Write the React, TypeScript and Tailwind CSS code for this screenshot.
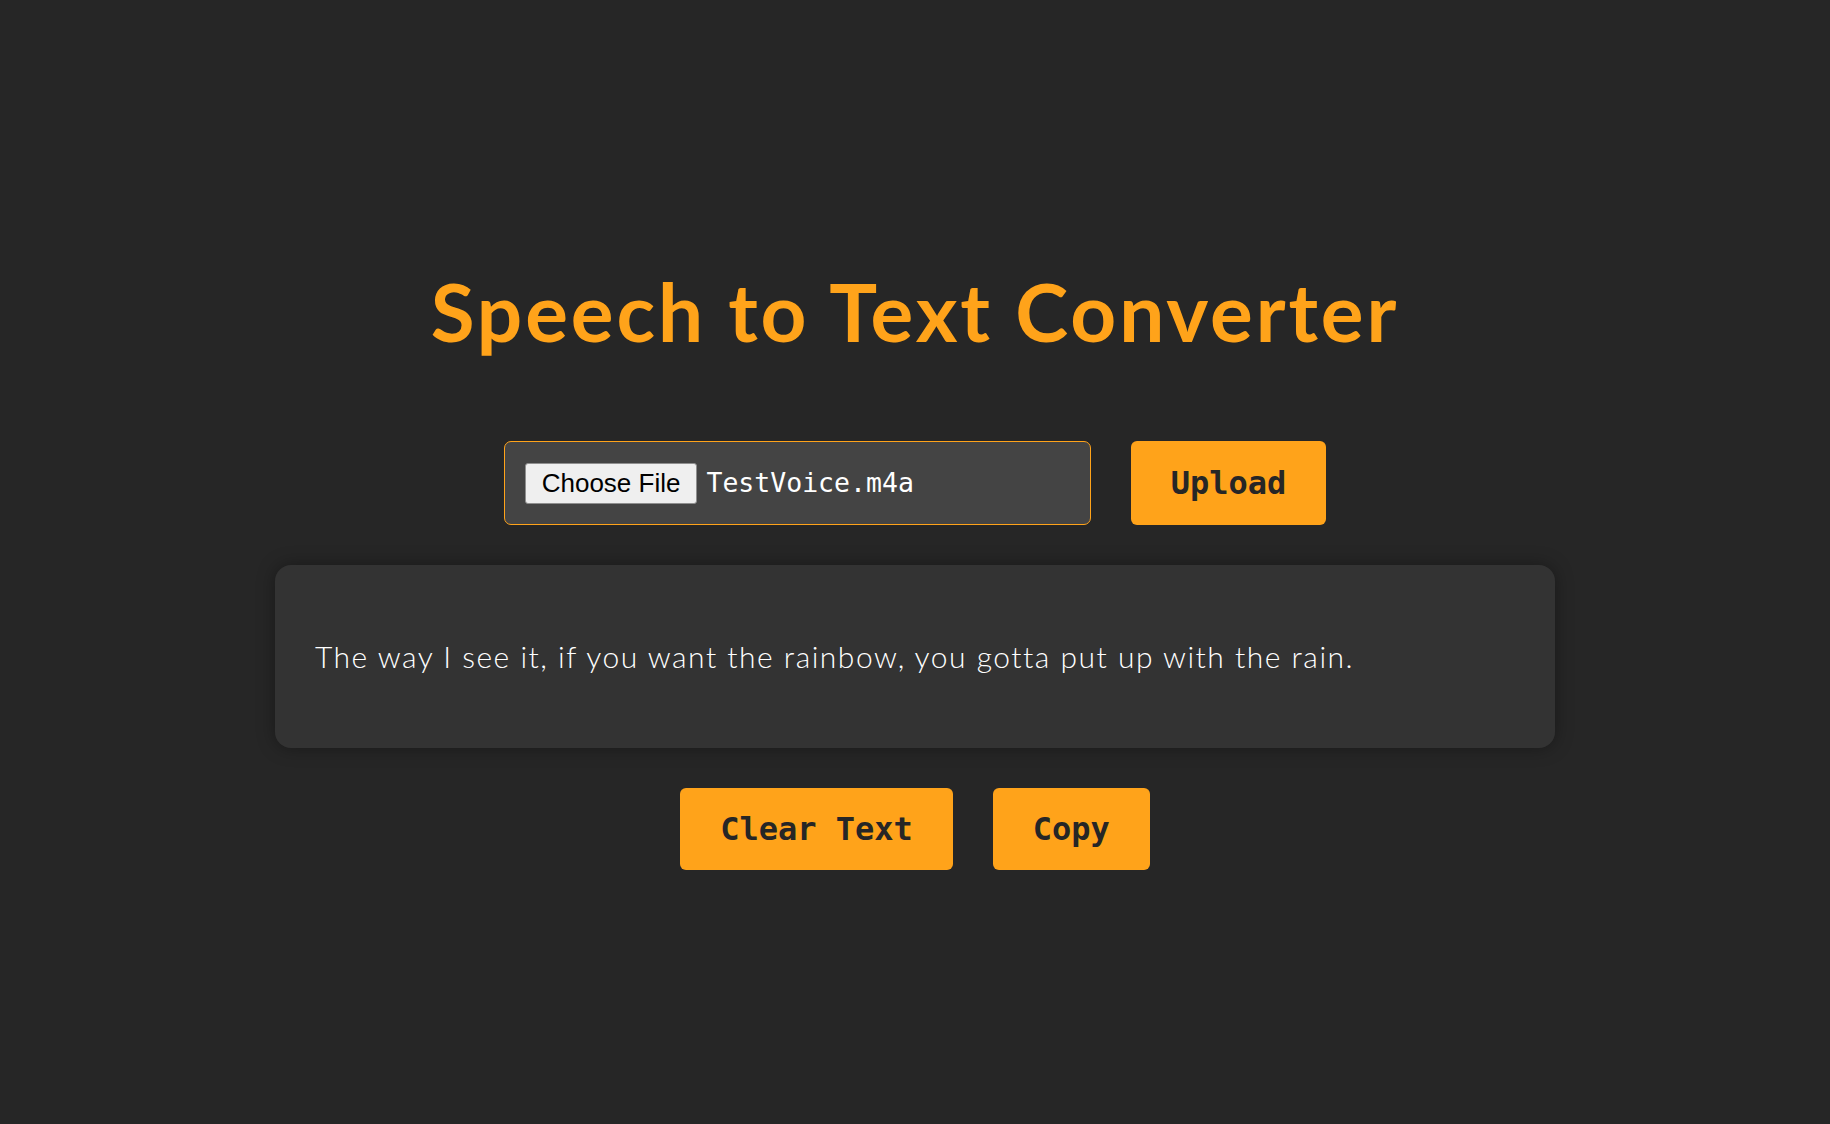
import React, { useState } from "react";

const sample = "The way I see it, if you want the rainbow, you gotta put up with the rain.";

export default function App() {
  const [text, setText] = useState(sample);
  const [fileName] = useState("TestVoice.m4a");

  return (
    <div className="min-h-screen w-full bg-[#262626] flex flex-col items-center pt-[271px]">
      {/* Title */}
      <h1 className="text-[80px] leading-none font-bold tracking-[2.9px] text-[#ffa31a] font-['Lato',sans-serif]">Speech to Text Converter</h1>

      {/* File picker + upload */}
      <div className="mt-[90px] flex items-center gap-10">
        <div className="w-[587px] h-[84px] flex items-center gap-[9px] px-5 rounded-[7px] border border-[#ffa31a] bg-[#444444]">
          <button className="h-[41px] px-4 rounded-[3px] border border-[#8f8f8f] bg-[#efefef] text-[26px] leading-none text-black font-['Liberation_Sans',sans-serif]">Choose File</button>
          <span className="text-[26.5px] text-white font-['DejaVu_Sans_Mono',monospace]">{fileName}</span>
        </div>
        <button className="h-[84px] px-10 rounded-[6px] bg-[#ffa31a] text-[32px] font-bold text-[#262626] font-['DejaVu_Sans_Mono',monospace]">Upload</button>
      </div>

      {/* Result */}
      <div className="mt-10 w-[1280px] h-[183px] flex items-center px-10 rounded-2xl bg-[#333333] shadow-[0_0_18px_rgba(0,0,0,0.35)]">
        <p className="text-[30px] font-light tracking-[1.5px] text-white font-['Lato',sans-serif]">{text}</p>
      </div>

      {/* Actions */}
      <div className="mt-10 flex items-center gap-10">
        <button onClick={() => setText("")} className="h-[82px] px-10 rounded-[6px] bg-[#ffa31a] text-[32px] font-bold text-[#262626] font-['DejaVu_Sans_Mono',monospace]">
          Clear Text
        </button>
        <button onClick={() => navigator.clipboard?.writeText(text)} className="h-[82px] px-10 rounded-[6px] bg-[#ffa31a] text-[32px] font-bold text-[#262626] font-['DejaVu_Sans_Mono',monospace]">
          Copy
        </button>
      </div>
    </div>
  );
}
